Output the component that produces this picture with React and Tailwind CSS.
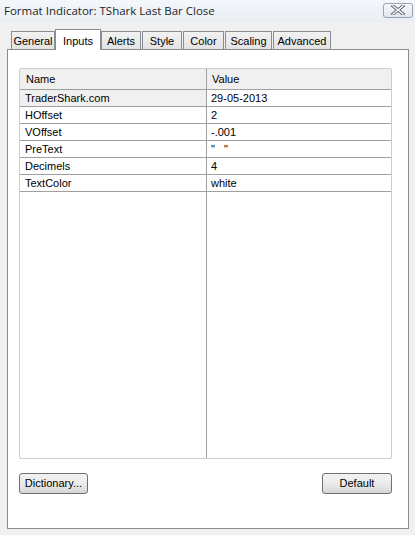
import React from "react";

const tabs = [
  { label: "General", w: "w-[44px]", ml: "ml-0" },
  { label: "Inputs", w: "w-[46px]", ml: "ml-0", active: true },
  { label: "Alerts", w: "w-[40px]", ml: "ml-0" },
  { label: "Style", w: "w-[40px]", ml: "ml-px" },
  { label: "Color", w: "w-[41px]", ml: "ml-px" },
  { label: "Scaling", w: "w-[47px]", ml: "ml-px" },
  { label: "Advanced", w: "w-[58px]", ml: "ml-px" },
];

const rows = [
  ["TraderShark.com", "29-05-2013", true],
  ["HOffset", "2"],
  ["VOffset", "-.001"],
  ["PreText", "\"   \""],
  ["Decimels", "4"],
  ["TextColor", "white"],
];

function CloseIcon() {
  return (
    <svg width="16" height="10" viewBox="0 0 16 10">
      <path d="M3 1 L13 9 M13 1 L3 9" stroke="#5a6270" strokeWidth="3.2" strokeLinecap="square" />
      <path d="M3 1 L13 9 M13 1 L3 9" stroke="#ffffff" strokeWidth="1.4" strokeLinecap="square" />
    </svg>
  );
}

export default function App() {
  return (
    <div
      className="w-[415px] h-[535px] bg-[#f0f0f0] flex flex-col text-[11px] text-black overflow-hidden"
      style={{ fontFamily: "'Liberation Sans', Arial, sans-serif" }}
    >
      {/* Title bar */}
      <div className="h-[22px] flex items-center justify-between bg-gradient-to-b from-[#f4f7fb] to-[#e9eef4] pl-[4px] pr-[2px]">
        <span
          className="text-[11.5px] text-[#1e1e1e]"
          style={{ fontFamily: "'Open Sans', 'Noto Sans', sans-serif" }}
        >
          Format Indicator: TShark Last Bar Close
        </span>
        <div className="w-[30px] h-[15px] mt-[-2px] rounded-[3px] border border-[#9aa3ad] bg-gradient-to-b from-[#f6f8fa] to-[#e3e7ec] flex items-center justify-center">
          <CloseIcon />
        </div>
      </div>

      {/* Tabs */}
      <div className="flex items-end pl-[11px] mt-[7px] h-[21px] relative z-10">
        {tabs.map((t) =>
          t.active ? (
            <div
              key={t.label}
              className={`${t.w} ${t.ml} h-[21px] bg-white border border-b-0 border-[#898c95] flex items-start justify-center pt-[3px]`}
            >
              {t.label}
            </div>
          ) : (
            <div
              key={t.label}
              className={`${t.w} ${t.ml} h-[18px] mb-px bg-gradient-to-b from-[#f2f2f2] to-[#e3e3e3] border border-b-0 border-[#898c95] flex items-center justify-center pt-[2px]`}
            >
              {t.label}
            </div>
          )
        )}
      </div>

      {/* Panel */}
      <div className="ml-[7px] w-[402px] h-[480px] -mt-px bg-white border border-[#898c95] flex flex-col pl-[11px] pt-[18px]">
        <div className="w-[373px] h-[391px] border border-[#c8ced6] rounded-[2px] flex flex-col relative">
          {/* Column divider */}
          <div className="absolute left-[186px] top-0 bottom-0 w-px bg-[#a0a0a0]" />
          {/* Header */}
          <div className="h-[21px] bg-[#f0f0f0] border-b border-[#a0a0a0] flex items-center">
            <div className="w-[186px] pl-[6px] pt-[1px]">Name</div>
            <div className="pl-[6px] pt-[1px]">Value</div>
          </div>
          {rows.map(([n, v, sel]) => (
            <div key={n} className="h-[17px] border-b border-[#a0a0a0] flex items-center">
              <div className={`w-[186px] h-full pl-[5px] flex items-center ${sel ? "bg-[#f0f0f0]" : ""}`}>{n}</div>
              <div className="pl-[5px] whitespace-pre">{v}</div>
            </div>
          ))}
        </div>

        <div className="flex justify-between w-[373px] mt-[14px]">
          <button className="w-[69px] h-[21px] rounded-[3px] border border-[#707070] bg-gradient-to-b from-[#f2f2f2] via-[#ebebeb] to-[#d6d6d6] text-[11px] flex items-center justify-center">
            Dictionary...
          </button>
          <button className="w-[70px] h-[21px] rounded-[3px] border border-[#707070] bg-gradient-to-b from-[#f2f2f2] via-[#ebebeb] to-[#d6d6d6] text-[11px] flex items-center justify-center">
            Default
          </button>
        </div>
      </div>
    </div>
  );
}
